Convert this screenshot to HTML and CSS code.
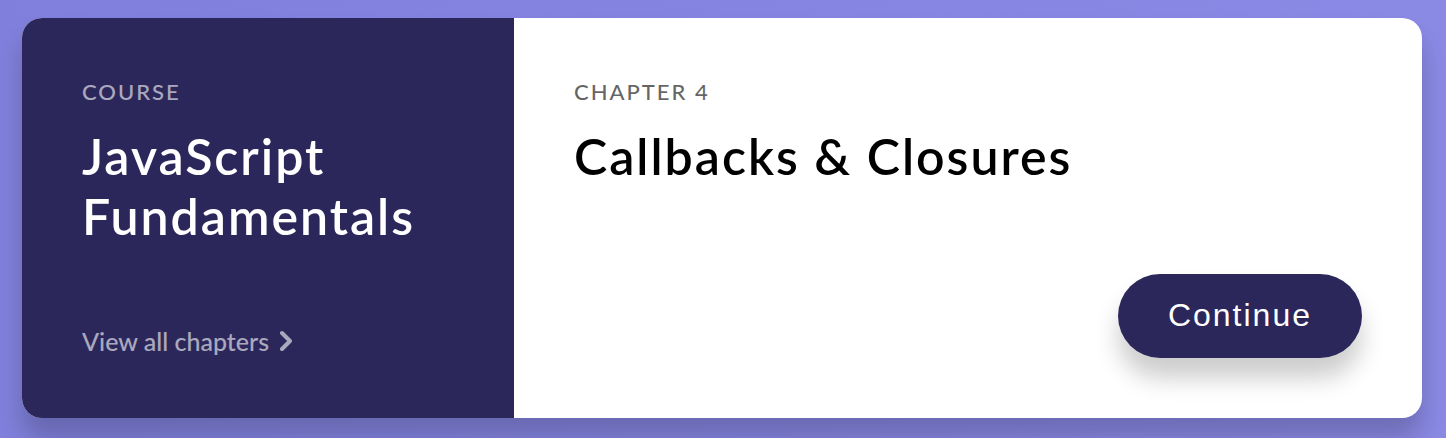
FILE: index.html
```html
<!DOCTYPE html>
<html lang="en">
<head>
<meta charset="utf-8">
<meta name="viewport" content="width=device-width, initial-scale=1">
<title>JavaScript Fundamentals</title>
<link rel="stylesheet" href="styles.css">
</head>
<body>
<main class="course">
  <section class="course-preview">
    <p class="eyebrow">Course</p>
    <h1 class="title">JavaScript Fundamentals</h1>
    <a class="chapters-link" href="#chapters">View all chapters
      <svg class="chevron" viewBox="0 0 14 22" aria-hidden="true"><path d="M3 3 L11 11 L3 19"/></svg>
    </a>
  </section>
  <section class="course-info">
    <p class="eyebrow">Chapter 4</p>
    <h2 class="title">Callbacks &amp; Closures</h2>
    <button class="continue" type="button">Continue</button>
  </section>
</main>
</body>
</html>
```
FILE: styles.css
```css
* {
  box-sizing: border-box;
}

body {
  margin: 0;
  min-height: 100vh;
  padding: 18px 24px 20px 22px;
  background: linear-gradient(to right, #8080dc, #8a89e4);
  font-family: Lato, "Open Sans", sans-serif;
  overflow: hidden;
}

.course {
  display: flex;
  min-height: 400px;
  border-radius: 20px;
  background: #fff;
  box-shadow: 0 20px 24px rgba(0, 0, 0, 0.2);
}

.course-preview,
.course-info {
  display: flex;
  flex-direction: column;
  align-items: flex-start;
  padding: 60px;
}

.course-preview {
  flex: 0 0 492px;
  border-radius: 20px 0 0 20px;
  background: #2b275b;
  color: #fff;
}

.course-info {
  flex: 1;
  color: #000;
}

.eyebrow {
  margin: 0;
  font-size: 22px;
  font-weight: 500;
  line-height: 28px;
  letter-spacing: 2px;
  text-transform: uppercase;
  opacity: 0.6;
}

.title {
  margin: 20px 0;
  font-size: 50px;
  font-weight: 600;
  line-height: 60px;
  letter-spacing: 2px;
}

.chapters-link {
  display: flex;
  align-items: center;
  gap: 10px;
  margin-top: auto;
  color: inherit;
  font-size: 25px;
  font-weight: 500;
  line-height: 34px;
  text-decoration: none;
  opacity: 0.6;
}

.chevron {
  width: 14px;
  height: 22px;
  fill: none;
  stroke: currentColor;
  stroke-width: 4;
  stroke-linecap: round;
  stroke-linejoin: round;
}

.continue {
  align-self: flex-end;
  margin-top: auto;
  padding: 23px 50px 25px;
  border: 0;
  border-radius: 100px;
  background: #2b275b;
  box-shadow: 0 20px 24px rgba(0, 0, 0, 0.2);
  color: #fff;
  font-family: "Liberation Sans", Arial, sans-serif;
  font-size: 32px;
  line-height: 36px;
  letter-spacing: 2px;
}
```
